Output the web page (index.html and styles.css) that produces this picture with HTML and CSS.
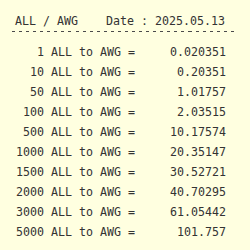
FILE: index.html
```html
<!DOCTYPE html>
<html>
<head>
<meta charset="utf-8">
<link rel="stylesheet" href="styles.css">
</head>
<body>
<div class="page">
  <div class="head">ALL / AWG    Date : 2025.05.13</div>
  <div class="rule"></div>
  <div class="rows">
    <div class="l">1 ALL to AWG =</div><div class="r">0.020351</div>
    <div class="l">10 ALL to AWG =</div><div class="r">0.20351</div>
    <div class="l">50 ALL to AWG =</div><div class="r">1.01757</div>
    <div class="l">100 ALL to AWG =</div><div class="r">2.03515</div>
    <div class="l">500 ALL to AWG =</div><div class="r">10.17574</div>
    <div class="l">1000 ALL to AWG =</div><div class="r">20.35147</div>
    <div class="l">1500 ALL to AWG =</div><div class="r">30.52721</div>
    <div class="l">2000 ALL to AWG =</div><div class="r">40.70295</div>
    <div class="l">3000 ALL to AWG =</div><div class="r">61.05442</div>
    <div class="l">5000 ALL to AWG =</div><div class="r">101.757</div>
  </div>
</div>
</body>
</html>
```

FILE: styles.css
```css
html, body {
  margin: 0;
  padding: 0;
  background: #ffffe0;
}
.page {
  width: 250px;
  height: 250px;
  padding: 11px 0 0 10px;
  box-sizing: border-box;
  font-family: "DejaVu Sans Mono", monospace;
  font-size: 11.63px;
  color: #333333;
}
.head {
  white-space: pre;
  line-height: 20px;
  height: 20px;
  padding-left: 5px;
}
.rule {
  height: 1px;
  width: 222px;
  margin: 0 0 10px 2px;
  background-image: repeating-linear-gradient(to right, #4a4a4a 0 3px, transparent 3px 7.06px);
}
.rows {
  display: grid;
  grid-template-columns: 125px 91px;
  grid-auto-rows: 20px;
  line-height: 20px;
}
.l, .r {
  text-align: right;
  white-space: pre;
}
```
